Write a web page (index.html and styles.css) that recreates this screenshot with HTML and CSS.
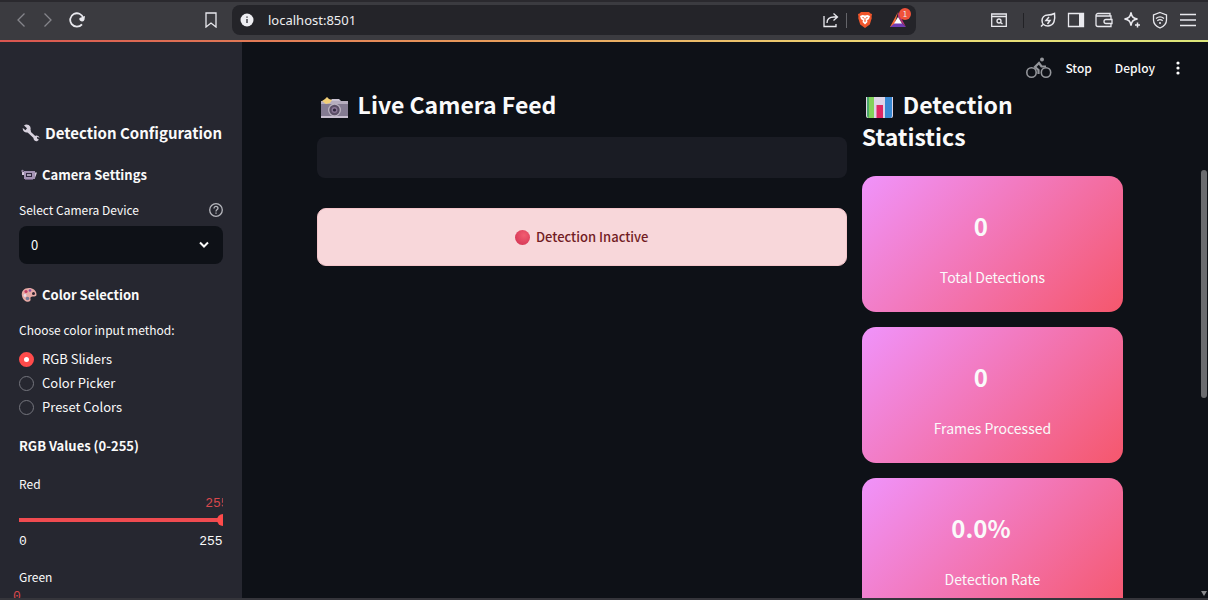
FILE: index.html
```html
<!DOCTYPE html>
<html lang="en">
<head>
<meta charset="utf-8">
<title>Detection</title>
<link rel="stylesheet" href="styles.css">
</head>
<body>
<header class="browser">
  <div class="nav">
    <button class="icon-btn dim" aria-label="Back"><svg width="12" height="16" viewBox="0 0 12 16"><path d="M9.500 1.500 3 8l6.500 6.500"/></svg></button>
    <button class="icon-btn dim" aria-label="Forward"><svg width="12" height="16" viewBox="0 0 12 16"><path d="M2.500 1.500 9 8l-6.500 6.500"/></svg></button>
    <button class="icon-btn" aria-label="Reload"><svg width="18" height="16" viewBox="0 0 18 16"><path d="M13 12.300A6.700 6.700 0 1 1 14.300 6" stroke-width="1.800"/><path d="M10.500 6a2.500 2.500 0 0 0 5 1.500L16 4z" fill="currentColor" stroke="none"/></svg></button>
  </div>
  <button class="icon-btn bookmark" aria-label="Bookmark"><svg width="12" height="16" viewBox="0 0 12 16"><path d="M1 1h10v14l-5-4-5 4z"/></svg></button>
  <div class="address">
    <svg class="info" width="14" height="14" viewBox="0 0 14 14"><circle cx="7" cy="7" r="6.500" fill="#eeeef2" stroke="none"/><path d="M7 6v4M7 3.500v1.200" stroke="#29292e"/></svg>
    <input class="url" type="text" aria-label="Address" value="localhost:8501">
    <button class="icon-btn share" aria-label="Share"><svg width="16" height="16" viewBox="0 0 16 16"><path d="M1 4v10.500h12V12M4 11c0-4 3-6 7-6h3M10.500 1.500 14.500 5l-4 3.500"/></svg></button>
    <span class="divider"></span>
    <button class="icon-btn lion" aria-label="Shields"><svg width="16" height="18" viewBox="0 0 16 18"><path d="M4 1h8l1.500 1.500L15 3l-.5 3 .3 1-2 6.500L8 17l-4.800-3.500-2-6.500.3-1L1 3l1.500-.5z" fill="#f1562b" stroke="none"/><path d="M3 5l2.500-1L8 4.500 10.500 4 13 5l-1 3-2 1.500.5 1.500L8 13.500 5.500 11 6 9.500 4 8z" fill="#fff" stroke="none"/><path d="M5.500 6.500l1.500.5M10.500 6.500 9 7M8 7v2.500M7 10h2" stroke="#f1562b" stroke-width="1"/></svg></button>
    <button class="icon-btn bat" aria-label="Rewards"><svg width="22" height="20" viewBox="0 0 22 20"><path d="M9 2 1 17h8l0-5-3 1z" fill="#f36b39" stroke="none"/><path d="M1 17h16l-4-4H6z" fill="#703cb3" stroke="none"/><path d="m9 2 8 15-4-4-4-6z" fill="#b23078" stroke="none"/><path d="m9 7 4 6.500H5z" fill="#fff" stroke="none"/></svg><span class="badge">1</span></button>
  </div>
  <div class="tools">
    <button class="icon-btn" aria-label="Find"><svg width="16" height="16" viewBox="0 0 16 16"><path d="M.700 2h14.600v12.300H.700zM1 4.500h14"/><circle cx="8" cy="9" r="2"/><path d="m9.500 10.500 2 1.500"/></svg></button>
    <span class="divider dark"></span>
    <button class="icon-btn" aria-label="Energy"><svg width="16" height="16" viewBox="0 0 16 16"><path d="M14.500 1.500c.8 6 0 12-6.500 12.500C0 14 0 3 8 3c3 0 4.500-.5 6.500-1.500zM3 12.500l-2 2M9 5 6 8.500h4L7.500 12" stroke-width="1.500"/></svg></button>
    <button class="icon-btn" aria-label="Sidebar"><svg width="18" height="16" viewBox="0 0 18 16"><path d="M1.500 1.500h15v13h-15z"/><path d="M12 1h5v14h-5z" fill="currentColor" stroke="none"/></svg></button>
    <button class="icon-btn" aria-label="Wallet"><svg width="18" height="16" viewBox="0 0 18 16"><path d="M15 4V1.500H3a2 2 0 0 0-2 2v9a2 2 0 0 0 2 2h13v-3M1.500 4H16v3.500M17 7.500h-6a2 2 0 0 0 0 4h6z"/></svg></button>
    <button class="icon-btn" aria-label="Assistant"><svg width="18" height="18" viewBox="0 0 18 18"><path d="M8 1.500c.8 4.500 2 5.700 6.500 6.500-4.500.8-5.700 2-6.500 6.500C7.200 10 6 8.800 1.500 8 6 7.200 7.200 6 8 1.500zM14.500 11.500v5M12 14h5" stroke-width="1.500"/></svg></button>
    <button class="icon-btn" aria-label="VPN"><svg width="16" height="18" viewBox="0 0 16 18"><path d="M8 1.500 14.500 4v5c0 4-3 6.500-6.500 8-3.500-1.500-6.500-4-6.500-8V4zM4 7.500c2.500-2 5.500-2 8 0M5.300 9.800c1.700-1.400 3.700-1.400 5.400 0M7 12h2"/></svg></button>
    <button class="icon-btn" aria-label="Menu"><svg width="16" height="16" viewBox="0 0 16 16"><path d="M0 2.500h16M0 8h16M0 13.500h16"/></svg></button>
  </div>
</header>
<div class="app">
  <aside class="sidebar">
    <h2 class="side-title"><svg class="emoji" width="18" height="18" viewBox="0 0 18 18"><path d="M7 8l7 6.500" stroke="#d9d3df" stroke-width="2.500" stroke-linecap="round"/><path d="M2 1.500l3 2.800-1.500 2L.8 4A4 4 0 0 0 5.500 8.500l2 .5 1.500-1.500-.5-2A4 4 0 0 0 2 1.500zM17 15.800l-2.500-1.500 1-1.500 2 1.200a3 3 0 0 0-4-2.300l-2 2.500a3 3 0 0 0 3.500 3z" fill="#d9d3df"/></svg>Detection Configuration</h2>
    <h3 class="side-heading"><svg class="emoji" width="16" height="14" viewBox="0 0 16 14"><path d="M3 3h11v8H3z" fill="#a493b4"/><path d="M14 4.500h2L14 10zM1 4h2v3H1z" fill="#d5c9dc"/><path d="M5 5h6v4H5z" fill="#30273e"/><path d="M6 6h4v2H6z" fill="#aaa0b5"/><circle cx="1.500" cy="3" r="1.200" fill="#91829c"/><path d="M4 11h8v1H4z" fill="#706080"/></svg>Camera Settings</h3>
    <div class="label-row"><label for="camera">Select Camera Device</label><svg width="14" height="14" viewBox="0 0 14 14" class="help"><circle cx="7" cy="7" r="6.300"/><path d="M5 5.500c0-3 4-2.500 4-.3C9 6.500 7 6.500 7 8.500M7 9.600v1.100"/></svg></div>
    <div class="select-wrap"><select id="camera" class="select"><option>0</option></select><svg class="chevron" width="12" height="8" viewBox="0 0 12 8"><path d="m2 1.500 4 4 4-4"/></svg></div>
    <h3 class="side-heading"><svg class="emoji" width="16" height="16" viewBox="0 0 16 16"><path d="M8 1C3 1 0 4 1 9c1 5 6 7 8 5 1.500-1.500-.5-3 1-4s5.500.5 5.500-2.500C15.500 3.500 12 1 8 1z" fill="#e8aaa5"/><circle cx="5" cy="4.500" r="1.600" fill="#c63c65"/><circle cx="9" cy="3.500" r="1.300" fill="#884ca5"/><circle cx="12.500" cy="6.500" r="1.500" fill="#30232f"/><circle cx="4" cy="8.500" r="1.400" fill="#e8dcec"/><circle cx="6.500" cy="11.500" r="1.800" fill="#777a98"/></svg>Color Selection</h3>
    <fieldset class="radios">
      <legend>Choose color input method:</legend>
      <label><input type="radio" name="method" checked>RGB Sliders</label>
      <label><input type="radio" name="method">Color Picker</label>
      <label><input type="radio" name="method">Preset Colors</label>
    </fieldset>
    <h4 class="rgb-title">RGB Values (0-255)</h4>
    <div class="slider">
      <label for="red">Red</label>
      <div class="track-box"><output class="value" for="red">255</output><input id="red" type="range" min="0" max="255" value="255"></div>
      <div class="limits"><span>0</span><span>255</span></div>
    </div>
    <div class="slider">
      <label for="green">Green</label>
      <output class="value start" for="green">0</output>
      <input id="green" type="range" min="0" max="255" value="0">
    </div>
  </aside>
  <main class="main">
    <div class="toolbar">
      <svg class="bike" width="26" height="22" viewBox="0 0 26 22"><circle cx="5.500" cy="15.500" r="4.700" stroke-width="1.600"/><circle cx="20" cy="15.500" r="4.700" stroke-width="1.600"/><circle cx="16" cy="2.500" r="2" fill="currentColor" stroke="none"/><path d="M12.500 17v-4L9 10l4-4 2.500 3.500H20" stroke-width="2.200"/></svg>
      <button class="text-btn">Stop</button>
      <button class="text-btn">Deploy</button>
      <button class="more" aria-label="More"><svg width="4" height="14" viewBox="0 0 4 14"><g fill="#fff" stroke="none"><circle cx="2" cy="2" r="1.600"/><circle cx="2" cy="7" r="1.600"/><circle cx="2" cy="12" r="1.600"/></g></svg></button>
    </div>
    <div class="columns">
      <section class="feed">
        <h2 class="title"><svg class="emoji" width="27" height="22" viewBox="0 0 27 22"><path d="M0 4h27v17H0z" fill="#847b92"/><path d="M0 4h27v3H0z" fill="#b6adbf"/><path d="M0 19h27v2H0z" fill="#c8bfd0"/><path d="M9 4l2-2h7l2 2z" fill="#c9c2d2"/><path d="m1 4 3-2 2-2 2 2 3 1-2 3-4 1z" fill="#f1ce77"/><circle cx="13.500" cy="13" r="6.500" fill="#b9b2c0"/><circle cx="13.500" cy="13" r="5.200" fill="#5b4f67"/><circle cx="13.500" cy="13" r="3" fill="#8a7797"/><circle cx="13.500" cy="13" r="1.600" fill="#2e263d"/></svg>Live Camera Feed</h2>
        <div class="blank"></div>
        <div class="status"><span class="dot"></span>Detection Inactive</div>
      </section>
      <section class="stats">
        <h2 class="title"><svg class="emoji" width="27" height="22" viewBox="0 0 27 22"><path d="M0 0h27v19a2 2 0 0 1-2 2H2a2 2 0 0 1-2-2z" fill="#dfd5e8"/><path d="M1 0h7v21H2l-1-2z" fill="#83d35b"/><path d="M1 0h2v21L1 19z" fill="#4ca66b"/><path d="M10.500 8H17v13h-6.500z" fill="#df2864"/><path d="M19 0h7v19l-1 2h-6z" fill="#3989d3"/></svg>Detection Statistics</h2>
        <article class="card"><strong>0</strong><p>Total Detections</p></article>
        <article class="card"><strong>0</strong><p>Frames Processed</p></article>
        <article class="card"><strong>0.0%</strong><p>Detection Rate</p></article>
      </section>
    </div>
    <div class="scrollbar"><span class="thumb"></span><span class="arrow"></span></div>
  </main>
</div>
</body>
</html>
```
FILE: styles.css
```css
* { box-sizing: border-box; }
body {
  margin: 0;
  height: 100vh;
  display: flex;
  flex-direction: column;
  overflow: hidden;
  background: #0e1117;
  border-bottom: 2px solid #35353b;
  color: #fafafa;
  font-family: "Noto Sans CJK SC", "Noto Sans", sans-serif;
  font-size: 12px;
  line-height: 20px;
}
h2, h3, h4, p { margin: 0; }
svg { display: block; fill: none; stroke: currentColor; stroke-width: 1.3; flex: none; }
.emoji { stroke: none; }
button { font: inherit; color: inherit; border: 0; padding: 0; background: none; }

.browser {
  flex: none;
  height: 42px;
  display: flex;
  align-items: center;
  background: #3b3b40;
  color: #e9e9ee;
  border: 0 solid;
  border-bottom-width: 2px;
  border-image: linear-gradient(90deg, #d95550, #e89b5b 40%, #eedb76 75%, #dce77a) 1;
  box-shadow: inset 0 2px #2a292e;
}
.icon-btn { display: flex; justify-content: center; position: relative; }
.dim { color: #85858b; }
.nav { display: flex; align-items: center; gap: 15px; padding-left: 15px; width: 205px; }
.bookmark { margin-right: 15px; }
.address {
  display: flex;
  align-items: center;
  flex: 1;
  height: 30px;
  padding: 0 5px 0 8px;
  border-radius: 8px;
  background: #242429;
}
.url {
  flex: 1;
  min-width: 0;
  margin-left: 14px;
  padding: 0;
  border: 0;
  background: none;
  color: #eeeef0;
  font: 13px/20px "Noto Sans", sans-serif;
}
.divider { width: 1px; height: 15px; margin: 0 10px 0 7px; background: #65656a; }
.lion { margin-right: 16px; }
.badge {
  position: absolute;
  top: -2px;
  right: 0;
  width: 12px;
  height: 12px;
  border-radius: 6px;
  background: #f0523a;
  font-size: 8px;
  line-height: 12px;
  text-align: center;
}
.tools { display: flex; align-items: center; gap: 10px; padding: 0 11px 0 74px; }
.tools .icon-btn { width: 18px; }
.dark { margin: 0 5px; background: #222226; }

.app { display: flex; flex: 1; min-height: 0; }
.sidebar {
  width: 20%;
  flex: none;
  padding: 79px 19px 0;
  background: #262730;
  overflow: hidden;
}
.side-title { display: flex; align-items: center; gap: 5px; padding-left: 3px; font-size: 15px; line-height: 24px; white-space: nowrap; }
.side-heading { display: flex; align-items: center; gap: 5px; padding-left: 2px; font-size: 13px; line-height: 20px; margin: 20px 0 15px; }
.label-row { display: flex; justify-content: space-between; align-items: center; margin-bottom: 6px; }
.help { color: #b5b6bc; }
.select-wrap { display: grid; align-items: center; }
.select {
  grid-area: 1 / 1;
  appearance: none;
  width: 100%;
  height: 38px;
  padding: 0 12px;
  border: 0;
  border-radius: 8px;
  background: #0e1117;
  color: inherit;
  font: inherit;
  font-size: 13px;
}
.chevron { grid-area: 1 / 1; justify-self: end; margin-right: 13px; stroke-width: 2; pointer-events: none; }
.select-wrap + .side-heading { margin: 21px 0 15px; }
.radios { display: grid; gap: 4px; margin: 0; padding: 0; border: 0; }
.radios legend { padding: 0; margin-bottom: 9px; }
.radios label { display: flex; align-items: center; gap: 8px; font-size: 13px; }
.radios input {
  appearance: none;
  width: 15px;
  height: 15px;
  margin: 0;
  border: 1px solid #74757d;
  border-radius: 50%;
}
.radios input:checked { border: 5px solid #ff4b4b; background: #fff; }
.rgb-title { margin: 19px 0 18px; font-size: 13px; line-height: 20px; }
.slider { margin-bottom: 15px; }
.slider label { display: block; }
.value { display: block; height: 20px; color: #d9484c; font: 13px/20px "Liberation Mono", monospace; }
.track-box { overflow: hidden; }
.track-box .value { text-align: right; margin-right: -6px; }
.value.start { margin-left: -6px; }
.slider input {
  appearance: none;
  display: block;
  width: 100%;
  height: 12px;
  margin: 0;
  background: linear-gradient(#f04b50, #f04b50) center / 100% 4px no-repeat;
}
.track-box input { width: calc(100% + 6px); }
.slider input::-webkit-slider-thumb { appearance: none; width: 12px; height: 12px; border-radius: 50%; background: #ff4b4b; }
.limits { display: flex; justify-content: space-between; padding-top: 6px; font: 13px/20px "Liberation Mono", monospace; }

.main { flex: 1; min-width: 0; position: relative; overflow: hidden; }
.toolbar { display: flex; align-items: center; justify-content: flex-end; height: 46px; padding: 6px 28px 0 0; }
.bike { color: #94969b; margin-right: 13px; }
.text-btn { margin-right: 23px; font-weight: 500; }
.text-btn + .more { margin-left: -2px; }
.columns { display: grid; grid-template-columns: 530fr 261fr; gap: 15px; padding: 0 85px 0 75px; }
.title { font-size: 23px; line-height: 32px; }
.title .emoji { display: inline-block; vertical-align: -5px; margin: 0 10px 0 4px; }
.blank { height: 41px; margin-top: 17px; border-radius: 8px; background: #1a1c24; }
.status {
  display: flex;
  align-items: center;
  justify-content: center;
  gap: 6px;
  height: 58px;
  margin-top: 30px;
  border: 1px solid #f5c6cb;
  border-radius: 9px;
  background: #f8d7da;
  color: #721c24;
  font-size: 13px;
  font-weight: 500;
}
.dot { width: 15px; height: 15px; border-radius: 50%; background: radial-gradient(circle at 60% 35%, #f25c71, #cf2f50); }
.card {
  height: 136px;
  margin-bottom: 15px;
  padding: 32px 24px 0;
  border-radius: 14px;
  background: linear-gradient(135deg, #f093fb, #f5576c);
  text-align: center;
}
.stats .title { margin-bottom: 24px; padding-right: 28px; }
.card strong { display: block; padding-right: 23px; font-size: 24px; line-height: 36px; }
.card p { margin-top: 23px; font-size: 14px; line-height: 20px; }
.scrollbar { position: absolute; inset: 0 0 0 auto; width: 8px; }
.thumb { position: absolute; top: 23%; right: 1px; width: 6px; height: 41%; border-radius: 3px; background: #6b6c70; }
.arrow { position: absolute; bottom: 2px; right: 1px; border: 3px solid transparent; border-top: 5px solid #898a8d; border-bottom: 0; }
```
